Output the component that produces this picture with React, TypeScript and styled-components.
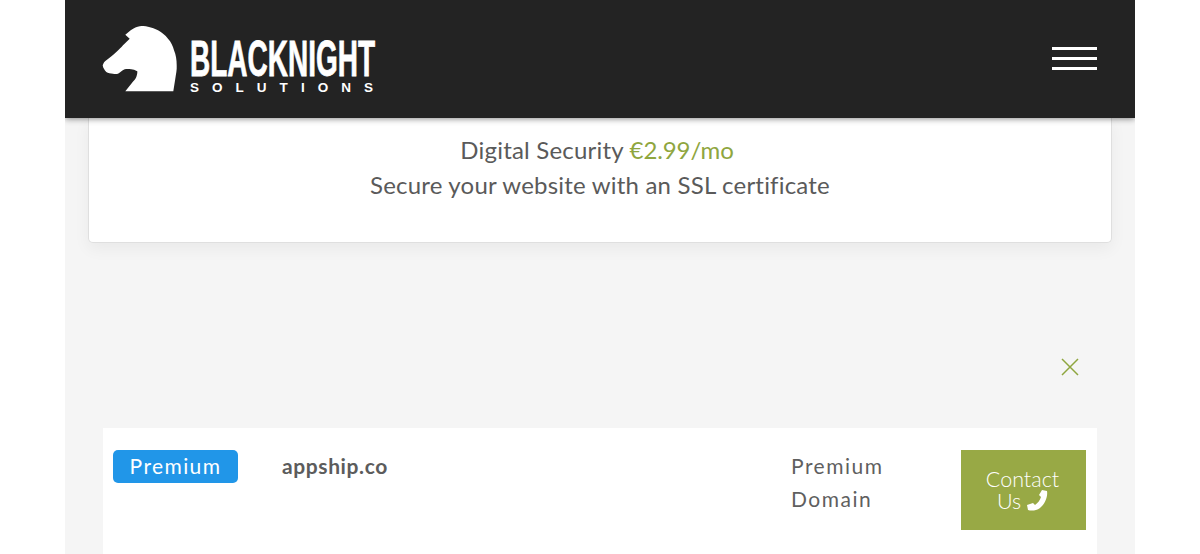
import React from "react";
import styled, { createGlobalStyle } from "styled-components";

const Global = createGlobalStyle`
  html, body { margin: 0; padding: 0; background: #fff; height: 554px; overflow: hidden; }
  * { box-sizing: border-box; }
`;

const Page = styled.div`
  width: 1070px;
  height: 554px;
  margin: 0 auto;
  background: #f5f5f5;
  overflow: hidden;
  font-family: Lato, "Open Sans", sans-serif;
  color: #5a5a5a;
`;

const Header = styled.header`
  height: 118px;
  background: #232323;
  box-shadow: 0 1px 6px rgba(0, 0, 0, 0.45);
  display: flex;
  align-items: flex-start;
  justify-content: space-between;
  padding: 22px 38px 0 37px;
  position: relative;
`;

const Menu = styled.div`
  width: 45px;
  margin-top: 25px;
  display: flex;
  flex-direction: column;
  gap: 7px;
`;

const MenuBar = styled.span`
  display: block;
  height: 3px;
  background: #fff;
`;

const Card = styled.section`
  margin: 0 23px;
  height: 125px;
  background: #fff;
  border: 1px solid #dfdfdf;
  border-top: 0;
  border-radius: 0 0 5px 5px;
  box-shadow: 0 6px 16px rgba(0, 0, 0, 0.05);
  padding-top: 14px;
  text-align: center;
  font-size: 24px;
  line-height: 35px;
  letter-spacing: 0.2px;
`;

const CardLine = styled.div``;

const Price = styled.span`
  color: #8fa63f;
  letter-spacing: -0.1px;
  margin-right: 6px;
`;

const CloseRow = styled.div`
  height: 185px;
  display: flex;
  justify-content: flex-end;
  padding: 115px 56px 0 0;
`;

const Row = styled.section`
  margin: 0 38px;
  height: 126px;
  background: #fff;
  padding: 22px 11px 0 10px;
  display: flex;
  align-items: flex-start;
`;

const Badge = styled.span`
  width: 125px;
  height: 33px;
  background: #2196e8;
  border-radius: 5px;
  color: #fff;
  font-size: 21px;
  letter-spacing: 1.4px;
  line-height: 32px;
  text-align: center;
`;

const Domain = styled.span`
  margin-left: 44px;
  width: 509px;
  font-size: 21px;
  font-weight: 700;
  line-height: 31px;
  color: #5c5c5c;
  letter-spacing: 0.6px;
`;

const Kind = styled.span`
  width: 170px;
  margin-top: -1px;
  font-size: 21px;
  line-height: 33px;
  letter-spacing: 1.5px;
  color: #5f5f5f;
`;

const Contact = styled.button`
  width: 125px;
  height: 80px;
  border: 0;
  padding: 0 2px 0 0;
  background: #98a945;
  color: #fff;
  font-family: inherit;
  font-size: 21.5px;
  font-weight: 300;
  line-height: 21px;
  text-align: center;
`;

const PhoneGlyph = styled.svg`
  width: 21px;
  height: 21px;
  vertical-align: -2px;
`;

const Logo = () => (
  <svg width="360" height="72" viewBox="0 0 360 72" role="img" aria-label="Blacknight Solutions">
    <path
      fill="#fff"
      d="M23.3 12.7 L28.7 8.3 C32 6 35 4.5 37.7 4.3 C41 3.8 44 4 46 4.7 C50 5.5 53 6.5 56 8.3 C60 10.5 63 13 66 16.7 C69 20 71 24 72 28.3 C74 33 74.7 38 74.7 43.3 C75 48 74 52 73.3 56.7 L71.3 69.3 L23.3 69.3 L29.3 61.7 C32 58.5 33.5 57 34.3 55 C35 53 35.5 51 35.3 49.3 C33 48 31 47.3 29.3 47.3 C26.5 46.8 24.5 46.8 22.7 47.3 C20 48.5 18 50.5 16 51.7 C14 52 12.5 52 11 51.7 C8.5 51.5 6 51 4.3 50 C2.5 48 1 46 0.7 43.3 C1.5 41 2.5 39.5 4.3 38.3 C8 35.5 11 33 14.3 30 C17 27.5 19 25.5 21 23.3 L27.7 16.7 Z"
    />
    <text
      x="88"
      y="54"
      fill="#fff"
      stroke="#fff"
      strokeWidth="0.8"
      fontFamily="'Liberation Sans', sans-serif"
      fontWeight="700"
      fontSize="50"
      textLength="185"
      lengthAdjust="spacingAndGlyphs"
    >
      BLACKNIGHT
    </text>
    <text
      x="88"
      y="70"
      fill="#fff"
      fontFamily="'Liberation Sans', sans-serif"
      fontWeight="700"
      fontSize="13.5"
      textLength="183"
      lengthAdjust="spacing"
    >
      SOLUTIONS
    </text>
  </svg>
);

const CloseIcon = () => (
  <svg width="18" height="18" viewBox="0 0 18 18">
    <path d="M1 1 L17 17 M17 1 L1 17" stroke="#8fa63f" strokeWidth="1.5" fill="none" />
  </svg>
);

const PhoneIcon = () => (
  <PhoneGlyph viewBox="0 0 21 21">
    <path
      fill="#fff"
      d="M15 0 L20 1 C21 7 18 14 13 18 C9 21 4 21 1 20 L0 15 L6 13 L8 15 C11 13 13 10 14 7 L12 5 Z"
    />
  </PhoneGlyph>
);

export default function App() {
  return (
    <>
      <Global />
      <Page>
        <Header>
          <Logo />
          <Menu>
            <MenuBar />
            <MenuBar />
            <MenuBar />
          </Menu>
        </Header>
        <Card>
          <CardLine>
            Digital Security <Price>€2.99/mo</Price>
          </CardLine>
          <CardLine>Secure your website with an SSL certificate</CardLine>
        </Card>
        <CloseRow>
          <CloseIcon />
        </CloseRow>
        <Row>
          <Badge>Premium</Badge>
          <Domain>appship.co</Domain>
          <Kind>
            Premium
            <br />
            Domain
          </Kind>
          <Contact>
            Contact
            <br />
            Us <PhoneIcon />
          </Contact>
        </Row>
      </Page>
    </>
  );
}
